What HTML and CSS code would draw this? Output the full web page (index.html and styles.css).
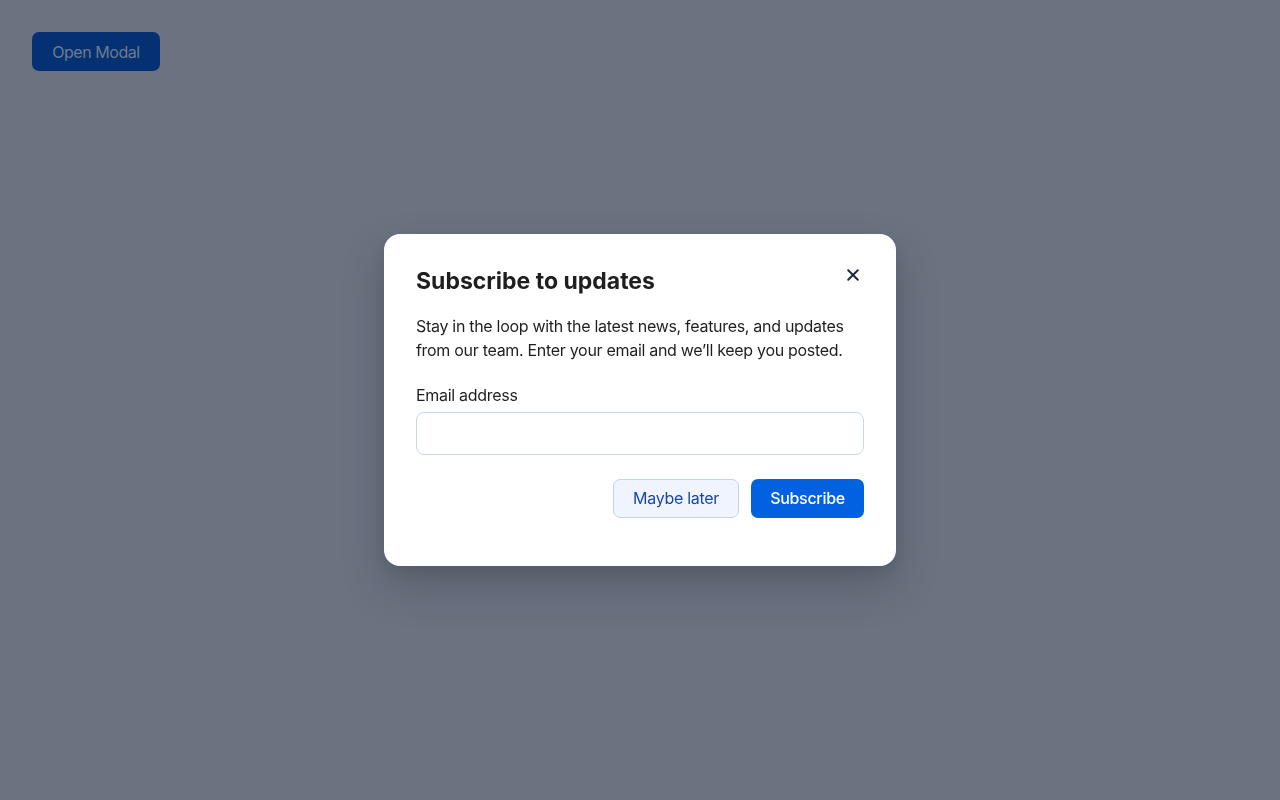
FILE: index.html
```html
<!DOCTYPE html>
<html lang="en">
<head>
<meta charset="utf-8">
<title>Subscribe modal</title>
<link rel="stylesheet" href="styles.css">
</head>
<body>
<div class="page">
  <button class="open-btn" type="button">Open Modal</button>
</div>
<div class="overlay">
  <div class="modal" role="dialog" aria-labelledby="mtitle">
    <div class="modal-head">
      <h2 id="mtitle" class="modal-title">Subscribe to updates</h2>
      <button class="close-btn" type="button" aria-label="Close">
        <svg width="14" height="14" viewBox="0 0 14 14" aria-hidden="true"><path d="M2.2 2.2L11.8 11.8M11.8 2.2L2.2 11.8" stroke="#1f2937" stroke-width="2" stroke-linecap="round"/></svg>
      </button>
    </div>
    <p class="modal-text">Stay in the loop with the latest news, features, and updates from our team. Enter your email and we’ll keep you posted.</p>
    <label class="field-label" for="email">Email address</label>
    <input id="email" class="field-input" type="email">
    <div class="modal-actions">
      <button class="btn btn-secondary" type="button">Maybe later</button>
      <button class="btn btn-primary" type="button">Subscribe</button>
    </div>
  </div>
</div>
</body>
</html>
```
FILE: styles.css
```css
* { box-sizing: border-box; }
html, body { margin: 0; height: 100%; }
body {
  background: #6b7280;
  font-family: Inter, "Noto Sans", sans-serif;
  color: #1f2328;
}
.page { padding: 32px; }
.open-btn {
  width: 128px;
  height: 39px;
  border: none;
  border-radius: 7px;
  background: #053172;
  color: #6c7a90;
  font-family: inherit;
  font-size: 16px;
  letter-spacing: -0.45px;
  padding: 0;
}
.overlay {
  position: fixed;
  inset: 0;
  display: flex;
  align-items: center;
  justify-content: center;
}
.modal {
  width: 512px;
  background: #ffffff;
  border-radius: 16px;
  padding: 32px 32px 48px;
  box-shadow: 0 20px 40px rgba(40, 46, 60, 0.28), 0 6px 14px rgba(40, 46, 60, 0.12);
  display: flex;
  flex-direction: column;
}
.modal-head {
  display: flex;
  justify-content: space-between;
  align-items: flex-start;
}
.modal-title {
  margin: 1px 0 0;
  font-size: 23px;
  line-height: 28px;
  font-weight: 700;
  color: #1f1f1f;
  letter-spacing: 0;
}
.close-btn {
  border: none;
  background: none;
  padding: 0;
  width: 18px;
  height: 18px;
  margin-top: 0;
  margin-right: 2px;
  display: flex;
  align-items: center;
  justify-content: center;
}
.modal-text {
  margin: 19px 0 0;
  font-size: 16px;
  line-height: 24px;
  color: #1f1f1f;
  letter-spacing: -0.3px;
}
.field-label {
  margin-top: 22px;
  font-size: 16px;
  line-height: 22px;
  color: #1f1f1f;
  letter-spacing: -0.3px;
}
.field-input {
  margin-top: 6px;
  height: 43px;
  width: 100%;
  border: 1px solid #c9d5f3;
  border-radius: 8px;
  font-family: inherit;
  font-size: 16px;
  padding: 0 12px;
  outline: none;
}
.modal-actions {
  margin-top: 24px;
  display: flex;
  justify-content: flex-end;
  gap: 12px;
}
.btn {
  height: 39px;
  border-radius: 7px;
  font-family: inherit;
  font-size: 16px;
  line-height: 20px;
  padding: 0 0 2px;
  white-space: nowrap;
  letter-spacing: -0.3px;
}
.btn-secondary {
  width: 126px;
  background: #eff4fe;
  border: 1px solid #c4d3f3;
  color: #1a48a8;
}
.btn-primary {
  width: 113px;
  background: #0062e1;
  border: none;
  color: #ffffff;
  font-weight: 500;
}
```
